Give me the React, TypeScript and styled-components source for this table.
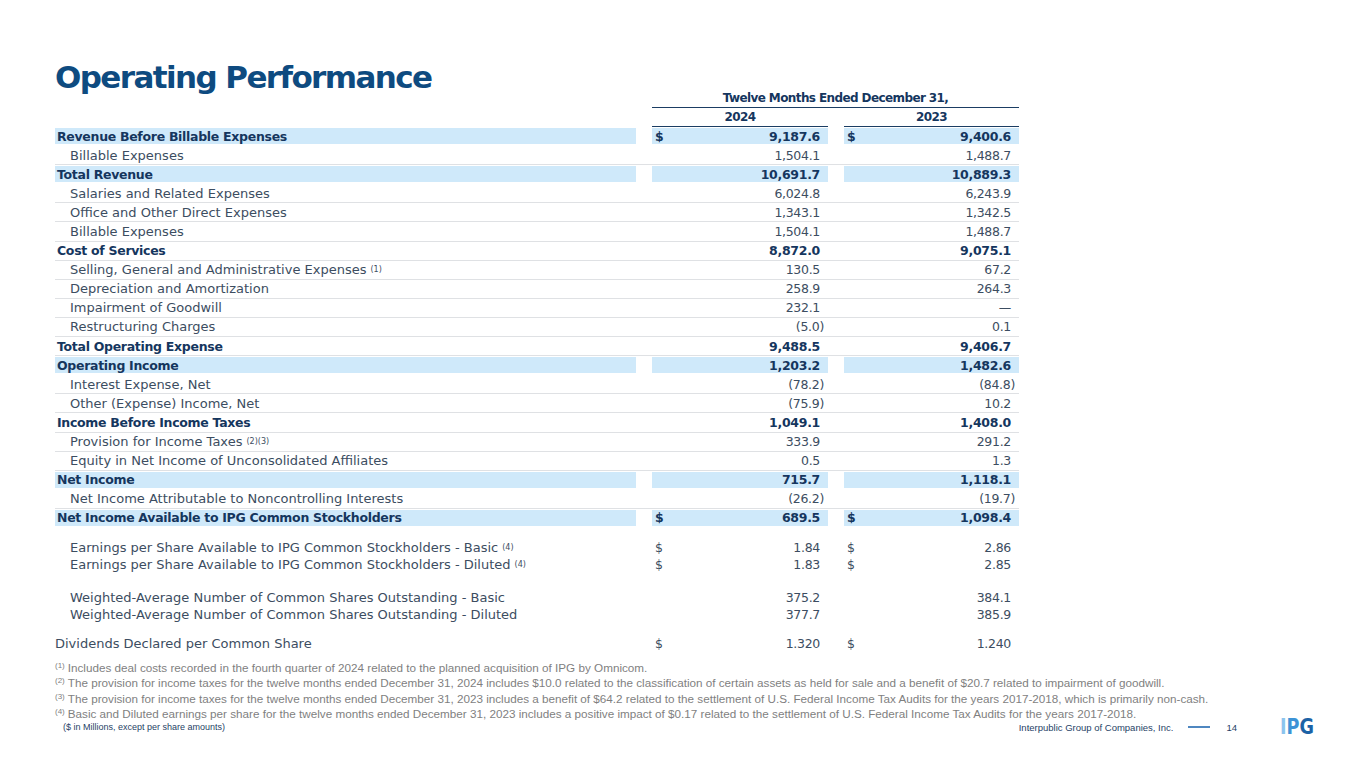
import React from "react";
import styled, { createGlobalStyle } from "styled-components";

// --- 전역 스타일 ---
const GlobalStyle = createGlobalStyle`
  body {
    margin: 0;
    background: #ffffff;
  }
`;

const NAVY = "#15365e";
const TEXT = "#3c4d61";
const HIGHLIGHT = "#cfe9fa";

const Slide = styled.div`
  width: 1365px;
  height: 768px;
  box-sizing: border-box;
  padding: 0 52px 0 55px;
  overflow: hidden;
  background: #fff;
  font-family: "DejaVu Sans", sans-serif;
  display: flex;
  flex-direction: column;
`;

const Title = styled.h1`
  margin: 0;
  padding-top: 60px;
  font-size: 31px;
  line-height: 34px;
  font-weight: 700;
  letter-spacing: -1.6px;
  color: #0e4b80;
`;

const Table = styled.div`
  width: 964px;
  margin-top: -5px;
  display: flex;
  flex-direction: column;
`;

const Grid = styled.div`
  display: grid;
  grid-template-columns: 581px 176px 175px;
  column-gap: 16px;
`;

const HeadRow = styled(Grid)`
  height: 19px;
`;

const HeadCell = styled.div<{ $span?: boolean }>`
  grid-column: ${(p) => (p.$span ? "2 / 4" : "auto")};
  box-sizing: border-box;
  border-bottom: 1px solid #1b3d63;
  text-align: center;
  font-size: 12px;
  line-height: 18px;
  font-weight: 700;
  letter-spacing: -0.6px;
  color: ${NAVY};
`;

const Row = styled(Grid)<{ $line?: boolean; $h: number }>`
  height: ${(p) => p.$h}px;
  box-sizing: border-box;
  border-bottom: 1px solid ${(p) => (p.$line ? "#dfe1e4" : "transparent")};
  align-items: stretch;
`;

const Label = styled.div<{ $bold?: boolean; $indent?: boolean; $hl?: boolean }>`
  display: flex;
  align-items: center;
  margin: ${(p) => (p.$hl ? "1px 0" : "0")};
  padding-left: ${(p) => (p.$indent ? "15px" : p.$bold ? "2px" : "0")};
  background: ${(p) => (p.$hl ? HIGHLIGHT : "transparent")};
  font-size: ${(p) => (p.$bold ? "12.5px" : "13px")};
  font-weight: ${(p) => (p.$bold ? 700 : 400)};
  letter-spacing: ${(p) => (p.$bold ? "-0.3px" : "0")};
  color: ${(p) => (p.$bold ? NAVY : TEXT)};
  white-space: nowrap;
`;

const Value = styled.div<{ $bold?: boolean; $hl?: boolean; $neg?: boolean }>`
  display: flex;
  align-items: center;
  justify-content: space-between;
  margin: ${(p) => (p.$hl ? "1px 0" : "0")};
  padding: 0 ${(p) => (p.$neg ? "4px" : "8px")} 0 3px;
  background: ${(p) => (p.$hl ? HIGHLIGHT : "transparent")};
  font-size: 12.5px;
  font-weight: ${(p) => (p.$bold ? 700 : 400)};
  letter-spacing: -0.3px;
  color: ${(p) => (p.$bold ? NAVY : TEXT)};
  white-space: nowrap;
`;

const Sup = styled.sup`
  font-size: 8px;
  font-weight: 400;
  vertical-align: 5px;
  line-height: 0;
  margin-left: 4px;
`;

const Group = styled.div<{ $gap: number }>`
  margin-top: ${(p) => p.$gap}px;
  display: flex;
  flex-direction: column;
`;

const Notes = styled.div`
  margin-top: 7px;
  font-family: "Liberation Sans", Arial, sans-serif;
  font-size: 11.7px;
  line-height: 15.3px;
  color: #7f7f7f;
  white-space: nowrap;
`;

const NoteSup = styled.sup`
  font-size: 8px;
  vertical-align: 4px;
  line-height: 0;
  margin-right: 3px;
`;

const Footer = styled.div`
  display: flex;
  align-items: center;
  height: 12px;
  padding-left: 8px;
  font-family: "Liberation Sans", Arial, sans-serif;
  font-size: 9px;
  color: #1f3f66;
`;

const FooterRight = styled.div`
  margin-left: auto;
  display: flex;
  align-items: center;
`;

const Company = styled.span`
  font-size: 9.5px;
`;

const Dash = styled.span`
  display: block;
  width: 22px;
  height: 2px;
  margin: 0 16px 0 15px;
  background: #4f87c0;
`;

const PageNum = styled.span`
  font-size: 9.5px;
  margin-right: 44px;
`;

const Logo = styled.div`
  display: flex;
  width: 32px;
  justify-content: center;
  font-family: "DejaVu Sans", sans-serif;
  font-weight: 700;
  font-size: 21px;
  line-height: 16px;
  margin-top: -1px;
  transform: scaleX(0.84);
`;

const LogoLetter = styled.span<{ $c: string }>`
  color: ${(p) => p.$c};
`;

type Kind = "hl" | "bold" | "sub" | "plain";

interface Line {
  label: string;
  sup?: string;
  a: string;
  b: string;
  kind: Kind;
  dollar?: boolean;
}

const main: Line[] = [
  { label: "Revenue Before Billable Expenses", a: "9,187.6", b: "9,400.6", kind: "hl", dollar: true },
  { label: "Billable Expenses", a: "1,504.1", b: "1,488.7", kind: "sub" },
  { label: "Total Revenue", a: "10,691.7", b: "10,889.3", kind: "hl" },
  { label: "Salaries and Related Expenses", a: "6,024.8", b: "6,243.9", kind: "sub" },
  { label: "Office and Other Direct Expenses", a: "1,343.1", b: "1,342.5", kind: "sub" },
  { label: "Billable Expenses", a: "1,504.1", b: "1,488.7", kind: "sub" },
  { label: "Cost of Services", a: "8,872.0", b: "9,075.1", kind: "bold" },
  { label: "Selling, General and Administrative Expenses", sup: "(1)", a: "130.5", b: "67.2", kind: "sub" },
  { label: "Depreciation and Amortization", a: "258.9", b: "264.3", kind: "sub" },
  { label: "Impairment of Goodwill", a: "232.1", b: "—", kind: "sub" },
  { label: "Restructuring Charges", a: "(5.0)", b: "0.1", kind: "sub" },
  { label: "Total Operating Expense", a: "9,488.5", b: "9,406.7", kind: "bold" },
  { label: "Operating Income", a: "1,203.2", b: "1,482.6", kind: "hl" },
  { label: "Interest Expense, Net", a: "(78.2)", b: "(84.8)", kind: "sub" },
  { label: "Other (Expense) Income, Net", a: "(75.9)", b: "10.2", kind: "sub" },
  { label: "Income Before Income Taxes", a: "1,049.1", b: "1,408.0", kind: "bold" },
  { label: "Provision for Income Taxes", sup: "(2)(3)", a: "333.9", b: "291.2", kind: "sub" },
  { label: "Equity in Net Income of Unconsolidated Affiliates", a: "0.5", b: "1.3", kind: "sub" },
  { label: "Net Income", a: "715.7", b: "1,118.1", kind: "hl" },
  { label: "Net Income Attributable to Noncontrolling Interests", a: "(26.2)", b: "(19.7)", kind: "sub" },
  { label: "Net Income Available to IPG Common Stockholders", a: "689.5", b: "1,098.4", kind: "hl", dollar: true },
];

const groups: { gap: number; rows: Line[] }[] = [
  {
    gap: 12,
    rows: [
      { label: "Earnings per Share Available to IPG Common Stockholders - Basic", sup: "(4)", a: "1.84", b: "2.86", kind: "sub", dollar: true },
      { label: "Earnings per Share Available to IPG Common Stockholders - Diluted", sup: "(4)", a: "1.83", b: "2.85", kind: "sub", dollar: true },
    ],
  },
  {
    gap: 16,
    rows: [
      { label: "Weighted-Average Number of Common Shares Outstanding - Basic", a: "375.2", b: "384.1", kind: "sub" },
      { label: "Weighted-Average Number of Common Shares Outstanding - Diluted", a: "377.7", b: "385.9", kind: "sub" },
    ],
  },
  {
    gap: 12,
    rows: [{ label: "Dividends Declared per Common Share", a: "1.320", b: "1.240", kind: "plain", dollar: true }],
  },
];

function TableRow({ row, h, line }: { row: Line; h: number; line: boolean }) {
  const bold = row.kind === "hl" || row.kind === "bold";
  const hl = row.kind === "hl";
  const cell = (v: string) => (
    <Value $bold={bold} $hl={hl} $neg={v.endsWith(")")}>
      <span>{row.dollar ? "$" : ""}</span>
      <span>{v}</span>
    </Value>
  );
  return (
    <Row $h={h} $line={line && !hl}>
      <Label $bold={bold} $hl={hl} $indent={row.kind === "sub"}>
        {row.label}
        {row.sup && <Sup>{row.sup}</Sup>}
      </Label>
      {cell(row.a)}
      {cell(row.b)}
    </Row>
  );
}

const notes = [
  ["(1)", "Includes deal costs recorded in the fourth quarter of 2024 related to the planned acquisition of IPG by Omnicom."],
  ["(2)", "The provision for income taxes for the twelve months ended December 31, 2024 includes $10.0 related to the classification of certain assets as held for sale and a benefit of $20.7 related to impairment of goodwill."],
  ["(3)", "The provision for income taxes for the twelve months ended December 31, 2023 includes a benefit of $64.2 related to the settlement of U.S. Federal Income Tax Audits for the years 2017-2018, which is primarily non-cash."],
  ["(4)", "Basic and Diluted earnings per share for the twelve months ended December 31, 2023 includes a positive impact of $0.17 related to the settlement of U.S. Federal Income Tax Audits for the years 2017-2018."],
];

export default function App() {
  return (
    <Slide>
      <GlobalStyle />
      <Title>Operating Performance</Title>

      <Table>
        <HeadRow>
          <div />
          <HeadCell $span>Twelve Months Ended December 31,</HeadCell>
        </HeadRow>
        <HeadRow>
          <div />
          <HeadCell>2024</HeadCell>
          <HeadCell>2023</HeadCell>
        </HeadRow>

        {main.map((r, i) => (
          <TableRow key={i} row={r} h={19.1} line={i < main.length - 1} />
        ))}

        {groups.map((g, gi) => (
          <Group key={gi} $gap={g.gap}>
            {g.rows.map((r, i) => (
              <TableRow key={i} row={r} h={17} line={false} />
            ))}
          </Group>
        ))}
      </Table>

      <Notes>
        {notes.map(([n, t]) => (
          <div key={n}>
            <NoteSup>{n}</NoteSup>
            {t}
          </div>
        ))}
      </Notes>

      <Footer>
        <span>($ in Millions, except per share amounts)</span>
        <FooterRight>
          <Company>Interpublic Group of Companies, Inc.</Company>
          <Dash />
          <PageNum>14</PageNum>
          <Logo>
            <LogoLetter $c="#8cc4ee">I</LogoLetter>
            <LogoLetter $c="#3d93d6">P</LogoLetter>
            <LogoLetter $c="#1c62a6">G</LogoLetter>
          </Logo>
        </FooterRight>
      </Footer>
    </Slide>
  );
}
